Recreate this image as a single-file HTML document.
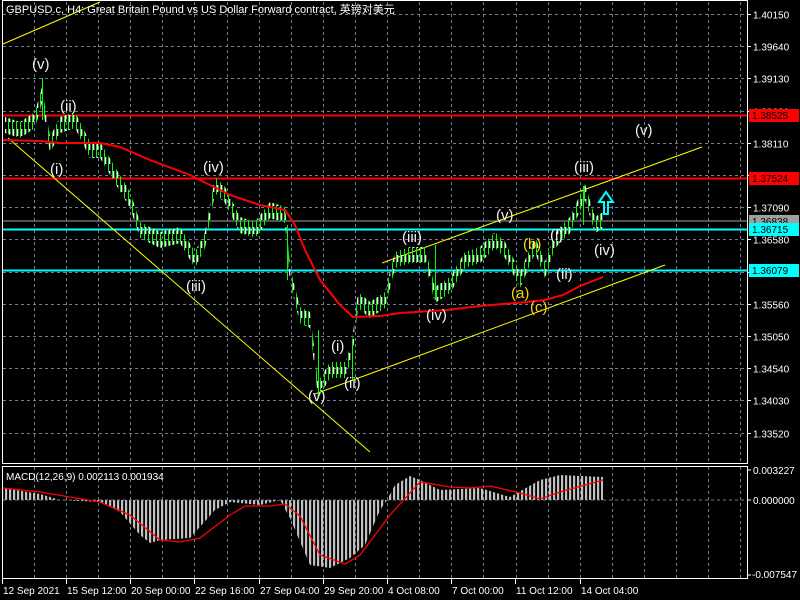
<!DOCTYPE html>
<html><head><meta charset="utf-8"><style>
html,body{margin:0;padding:0;background:#000;width:800px;height:600px;overflow:hidden}
svg{display:block}
text{font-family:"Liberation Sans","Noto Sans CJK SC",sans-serif}
</style></head><body>
<svg id="s" width="800" height="600" xmlns="http://www.w3.org/2000/svg">
<defs>
<pattern id="st" width="4" height="10" patternUnits="userSpaceOnUse" x="1"><rect x="0" y="0" width="2.2" height="10" fill="#c0c0c0"/></pattern>
<pattern id="cd" width="4" height="14" patternUnits="userSpaceOnUse"><rect x="0" y="0" width="1" height="14" fill="#00ff00"/><rect x="1" y="3" width="1.3" height="7" fill="#ffffff"/></pattern>
</defs>
<rect width="800" height="600" fill="#000"/>
<g id="grid" stroke="#6f7f90" stroke-dasharray="3,3" stroke-width="1"></g>
<polygon fill="url(#st)" points="3,500 3,488 40,494 60,500 100,502 120,512 140,535 150,543 160,540 190,538 215,510 230,502 260,505 280,500 290,518 310,565 330,568 350,558 365,545 380,510 387,500 395,485 410,476 420,480 440,490 480,488 510,497 540,480 560,475 603,477 603,500"/>
<line x1="3" y1="500" x2="747" y2="500" stroke="#6f7f90" stroke-dasharray="3,3"/>
<polyline fill="none" stroke="#ff0000" stroke-width="1.3" points="3,488 40,492 100,502 130,515 160,540 180,542 200,538 230,515 245,506 270,506 285,504 300,516 320,555 345,564 360,555 390,515 420,482 450,487 470,488 490,486 520,493 540,499 560,492 603,480"/>
<rect x="2.5" y="0.5" width="745" height="463" fill="none" stroke="#fff"/>
<rect x="2.5" y="466.5" width="745" height="112" fill="none" stroke="#fff"/>
<line x1="3" y1="221" x2="747" y2="221" stroke="#a0a0a0" stroke-width="1"/>
<line x1="3" y1="115.5" x2="747" y2="115.5" stroke="#ff0000" stroke-width="2"/>
<line x1="3" y1="178.5" x2="747" y2="178.5" stroke="#ff0000" stroke-width="2"/>
<line x1="3" y1="229.5" x2="747" y2="229.5" stroke="#00ffff" stroke-width="2"/>
<line x1="3" y1="270.5" x2="747" y2="270.5" stroke="#00ffff" stroke-width="2"/>
<g stroke="#ffff00" stroke-width="1">
<line x1="3" y1="44" x2="100" y2="2"/>
<line x1="8" y1="138" x2="370" y2="452"/>
<line x1="382" y1="263" x2="702" y2="147"/>
<line x1="315" y1="394" x2="665" y2="265"/>
</g>
<!-- candles approximation -->
<polygon fill="url(#cd)" points="5,117 20,122 35,112 42,87 50,137 60,117 75,112 90,142 100,142 115,167 130,192 140,222 160,232 180,227 195,252 205,232 215,177 225,187 240,217 255,222 270,202 285,207 290,267 300,307 310,312 318,382 330,362 345,362 352,342 358,292 370,302 385,292 395,252 410,247 425,247 435,287 450,277 465,252 480,247 495,232 505,242 520,272 535,237 545,262 555,232 570,217 585,184 595,217 603,212 603,228 595,233 585,200 570,233 555,248 545,278 535,253 520,288 505,258 495,248 480,263 465,268 450,293 435,303 425,263 410,263 395,268 385,308 370,318 358,308 352,358 345,378 330,378 318,398 310,328 300,323 290,283 285,223 270,218 255,238 240,233 225,203 215,193 205,248 195,268 180,243 160,248 140,238 130,208 115,183 100,158 90,158 75,128 60,133 50,153 42,103 35,128 20,138 5,133"/>
<g stroke="#00ff00" stroke-width="1">
<line x1="42.5" y1="78" x2="42.5" y2="120"/>
<line x1="287.5" y1="225" x2="287.5" y2="280"/>
<line x1="318.5" y1="330" x2="318.5" y2="398"/>
<line x1="352.5" y1="340" x2="352.5" y2="380"/>
<line x1="583.5" y1="186" x2="583.5" y2="225"/>
<line x1="435.5" y1="245" x2="435.5" y2="300"/>
</g>
<polyline fill="none" stroke="#ff0000" stroke-width="2" points="3,140 40,141 60,143 100,143 120,147 150,160 190,175 230,195 260,205 285,210 295,225 305,250 320,280 340,305 353,317 380,316 400,313 447,310 480,306 527,302 545,300 563,295 580,286 603,277"/>
<path d="M604,214 L604,202 L599,202 L606,192 L613,202 L608,202 L608,214 Z" fill="none" stroke="#00ffff" stroke-width="2"/>
<g font-size="15" fill="#f0f0f0">
<text x="32" y="69">(v)</text>
<text x="60" y="111">(ii)</text>
<text x="50" y="174">(i)</text>
<text x="203" y="172">(iv)</text>
<text x="186" y="291">(iii)</text>
<text x="308" y="401">(v)</text>
<text x="331" y="351">(i)</text>
<text x="344" y="388">(ii)</text>
<text x="402" y="242">(iii)</text>
<text x="426" y="320">(iv)</text>
<text x="496" y="220">(v)</text>
<text x="550" y="240">(i)</text>
<text x="556" y="279">(ii)</text>
<text x="574" y="172">(iii)</text>
<text x="594" y="255">(iv)</text>
<text x="635" y="135">(v)</text>
</g>
<g font-size="15" fill="#ffd700">
<text x="523" y="249">(b)</text>
<text x="511" y="298">(a)</text>
<text x="530" y="312">(c)</text>
</g>
<text x="6" y="13" font-size="11" fill="#fff">GBPUSD.c, H4:  Great Britain Pound vs US Dollar Forward contract, 英镑对美元</text>
<text x="6" y="480" font-size="10" fill="#fff">MACD(12,26,9) 0.002113 0.001934</text>
<g id="axis" font-size="10" fill="#fff"></g>
<rect x="749" y="109" width="50" height="13" fill="#ff0000"/><text x="752" y="119" font-size="10" fill="#000">1.38525</text>
<rect x="749" y="172" width="50" height="13" fill="#ff0000"/><text x="752" y="182" font-size="10" fill="#000">1.37524</text>
<rect x="749" y="215" width="50" height="13" fill="#a0a0a0"/><text x="752" y="225" font-size="10" fill="#000">1.36838</text>
<rect x="749" y="223" width="50" height="13" fill="#00ffff"/><text x="752" y="233" font-size="10" fill="#000">1.36715</text>
<rect x="749" y="264" width="50" height="13" fill="#00ffff"/><text x="752" y="274" font-size="10" fill="#000">1.36079</text>
<g font-size="10" fill="#fff">
<line x1="747" y1="470" x2="751" y2="470" stroke="#fff"/><text x="753" y="474">0.003227</text>
<line x1="747" y1="500" x2="751" y2="500" stroke="#fff"/><text x="753" y="504">0.000000</text>
<line x1="747" y1="575" x2="751" y2="575" stroke="#fff"/><text x="752" y="578">-0.007547</text>
</g>
<g id="dates" font-size="10" fill="#fff"></g>
</svg>
<script>
var NS="http://www.w3.org/2000/svg";
function el(n,a,p,t){var e=document.createElementNS(NS,n);for(var k in a)e.setAttribute(k,a[k]);if(t)e.textContent=t;p.appendChild(e);return e;}
var g=document.getElementById('grid');
for(var x=34;x<747;x+=32.1){el('line',{x1:Math.round(x)+.5,y1:2,x2:Math.round(x)+.5,y2:463},g);el('line',{x1:Math.round(x)+.5,y1:467,x2:Math.round(x)+.5,y2:578},g);}
var prices=["1.40150","1.39640","1.39130","1.38620","1.38110","1.37600","1.37090","1.36580","1.36070","1.35560","1.35050","1.34540","1.34030","1.33520"];
var ax=document.getElementById('axis');
for(var i=0;i<prices.length;i++){var y=Math.round(14+i*32.2)+.5;el('line',{x1:3,y1:y,x2:747,y2:y},g);
el('line',{x1:747,y1:y,x2:751,y2:y,stroke:'#fff'},ax);if(i!=8)el('text',{x:753,y:y+4},ax,prices[i]);}
var d=document.getElementById('dates');
var dl=["12 Sep 2021","15 Sep 12:00","20 Sep 00:00","22 Sep 16:00","27 Sep 04:00","29 Sep 20:00","4 Oct 08:00","7 Oct 00:00","11 Oct 12:00","14 Oct 04:00"];
for(var i=0;i<dl.length;i++){var x=i==0?2:Math.round(66+(i-1)*64.2);el('line',{x1:x+.5,y1:579,x2:x+.5,y2:584,stroke:'#fff'},d);el('text',{x:x+1,y:594},d,dl[i]);}
</script>
</body></html>
